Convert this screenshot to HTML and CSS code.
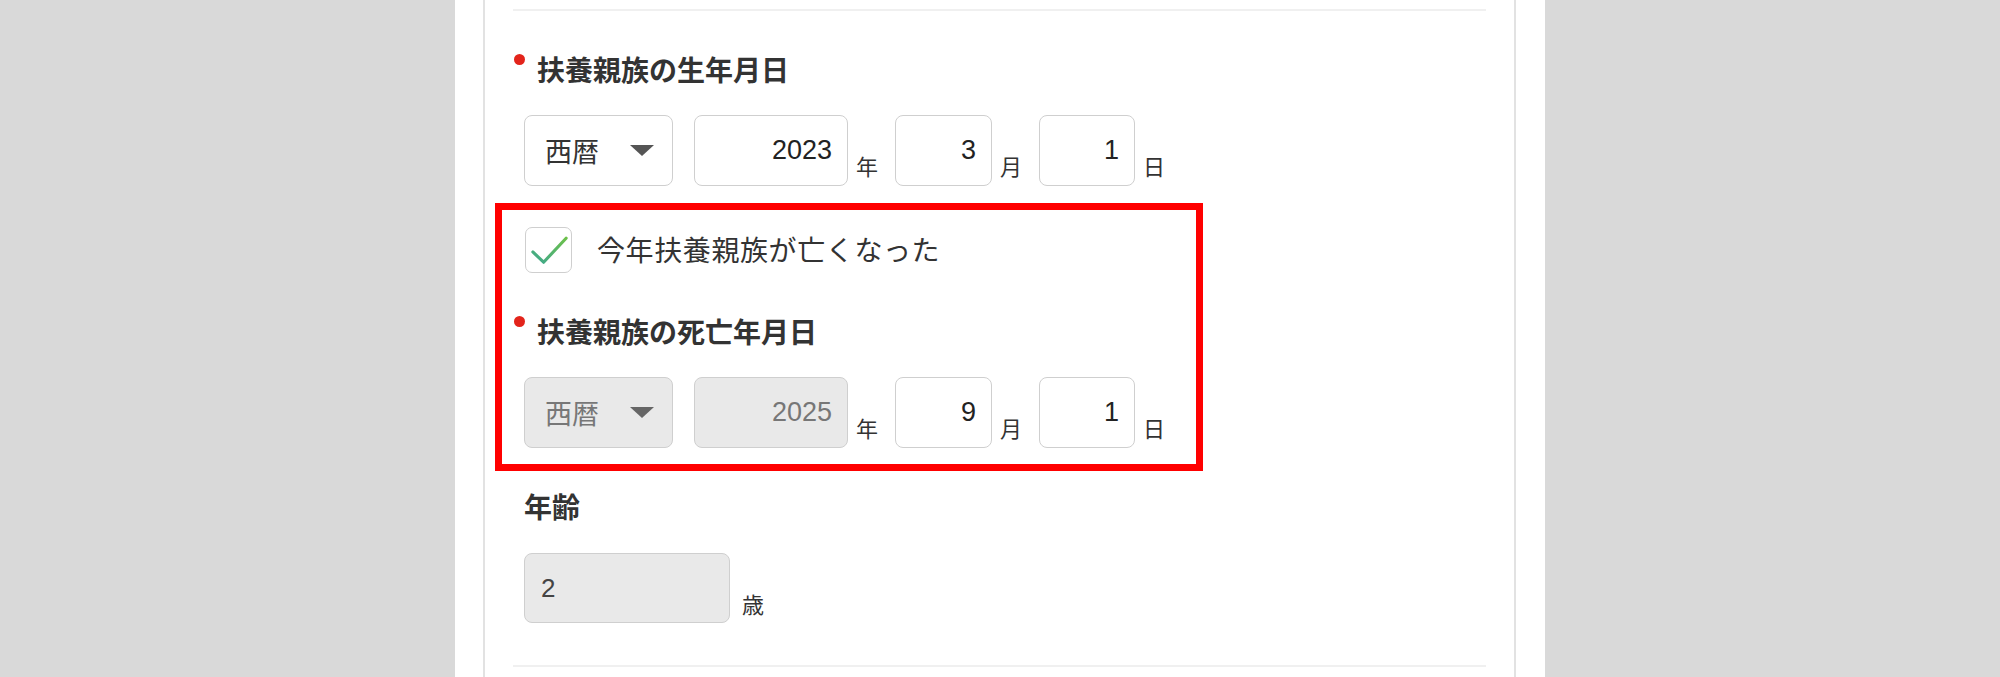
FILE: index.html
```html
<!DOCTYPE html>
<html lang="ja">
<head>
<meta charset="utf-8">
<title>扶養親族</title>
<link rel="stylesheet" href="styles.css">
</head>
<body>
<div class="page">
  <div class="card">
    <div class="sep"></div>

    <div class="field field-first">
      <div class="label"><span class="dot"></span><span>扶養親族の生年月日</span></div>
      <div class="date-row">
        <div class="select"><span>西暦</span><span class="caret"></span></div>
        <input class="num year" type="text" value="2023">
        <span class="unit">年</span>
        <input class="num month" type="text" value="3">
        <span class="unit">月</span>
        <input class="num day" type="text" value="1">
        <span class="unit">日</span>
      </div>
    </div>

    <div class="highlight">
      <label class="check-row">
        <span class="checkbox">
          <svg width="46" height="46" viewBox="0 0 46 46" aria-hidden="true">
            <defs>
              <linearGradient id="ck" x1="0" y1="1" x2="1" y2="0">
                <stop offset="0" stop-color="#3fa88e"/>
                <stop offset="1" stop-color="#6cc04a"/>
              </linearGradient>
            </defs>
            <polyline points="7,25 18,35.5 41,11" fill="none" stroke="url(#ck)" stroke-width="3.2" stroke-linecap="round" stroke-linejoin="round"/>
          </svg>
        </span>
        <span class="check-text">今年扶養親族が亡くなった</span>
      </label>

      <div class="field field-death">
        <div class="label"><span class="dot"></span><span>扶養親族の死亡年月日</span></div>
        <div class="date-row">
          <div class="select disabled"><span>西暦</span><span class="caret"></span></div>
          <input class="num year" type="text" value="2025" disabled>
          <span class="unit">年</span>
          <input class="num month" type="text" value="9">
          <span class="unit">月</span>
          <input class="num day" type="text" value="1">
          <span class="unit">日</span>
        </div>
      </div>
    </div>

    <div class="field field-age">
      <div class="label plain">年齢</div>
      <div class="date-row">
        <input class="num age" type="text" value="2" disabled>
        <span class="unit">歳</span>
      </div>
    </div>

    <div class="sep sep-bottom"></div>
  </div>
</div>
</body>
</html>
```

FILE: styles.css
```css
html, body {
  margin: 0;
  padding: 0;
}

body {
  background: #d9d9d9;
  font-family: "Liberation Sans", "Noto Sans CJK JP", sans-serif;
  color: #333;
  overflow: hidden;
}

.page {
  width: 1090px;
  height: 677px;
  margin-left: 455px;
  background: #fff;
  box-sizing: border-box;
  padding: 0 29px 0 28px;
}

.card {
  height: 100%;
  border-left: 2px solid #e2e2e2;
  border-right: 2px solid #e2e2e2;
  padding: 9px 28px 0;
  box-sizing: border-box;
}

.sep {
  height: 2px;
  background: #f0f0f0;
}

.field-first {
  margin-top: 41px;
}

.label {
  display: flex;
  align-items: flex-start;
  height: 34px;
  font-size: 28px;
  line-height: 34px;
  font-weight: bold;
  color: #333;
  font-family: "Noto Sans CJK JP", sans-serif;
}

.label.plain {
  padding-left: 11px;
}

.dot {
  width: 11px;
  height: 11px;
  border-radius: 50%;
  background: #e3241b;
  margin: 2px 12px 0 1px;
  flex: none;
}

.date-row {
  display: flex;
  align-items: flex-end;
  margin-top: 29px;
  margin-left: 11px;
}

.select,
.num {
  box-sizing: border-box;
  height: 71px;
  border: 1.5px solid #cfcfcf;
  border-radius: 8px;
  background: #fff;
  font-family: "Liberation Sans", "Noto Sans CJK JP", sans-serif;
  font-size: 27px;
  color: #222;
  flex: none;
}

.select {
  width: 149px;
  display: flex;
  align-items: center;
  justify-content: space-between;
  padding: 0 18px 0 20px;
  margin-right: 21px;
  font-family: "Noto Sans CJK JP", sans-serif;
  color: #333;
}

.caret {
  width: 0;
  height: 0;
  border-left: 12px solid transparent;
  border-right: 12px solid transparent;
  border-top: 11px solid #555;
}

.select.disabled,
.num:disabled {
  background: #e9e9e9;
  color: #777;
  -webkit-text-fill-color: #777;
}

.select.disabled .caret {
  border-top-color: #666;
}

.num {
  text-align: right;
  padding: 0 15px 0 10px;
  margin: 0;
  outline: none;
}

.year {
  width: 154px;
}

.month {
  width: 97px;
}

.day {
  width: 96px;
}

.unit {
  font-family: "Noto Sans CJK JP", sans-serif;
  font-size: 22px;
  line-height: 22px;
  color: #333;
  margin: 0 17px 10px 8px;
}

.highlight {
  box-sizing: border-box;
  width: 708px;
  margin: 17px 0 0 -18px;
  border: 7px solid #ff0000;
  padding: 17px 0 16px 11px;
}

.check-row {
  display: flex;
  align-items: center;
  height: 46px;
  margin-left: 12px;
}

.checkbox {
  box-sizing: border-box;
  width: 47px;
  height: 46px;
  border: 1.5px solid #cfcfcf;
  border-radius: 7px;
  background: #fff;
  display: flex;
  align-items: center;
  justify-content: center;
  flex: none;
}

.checkbox svg {
  display: block;
}

.check-text {
  margin-left: 25px;
  font-family: "Noto Sans CJK JP", sans-serif;
  font-size: 28px;
  letter-spacing: 0.6px;
  color: #333;
  line-height: 46px;
  margin-top: -2px;
}

.field-death {
  margin-top: 41px;
}

.field-age {
  margin-top: 18px;
}

.field-age .date-row {
  margin-top: 30px;
}

.num.age {
  width: 206px;
  height: 70px;
  text-align: left;
  padding: 0 15px 0 16px;
  font-size: 26px;
  color: #444;
  -webkit-text-fill-color: #444;
}

.field-age .unit {
  margin-bottom: 9px;
  margin-left: 12px;
}

.sep-bottom {
  margin-top: 42px;
}
```
